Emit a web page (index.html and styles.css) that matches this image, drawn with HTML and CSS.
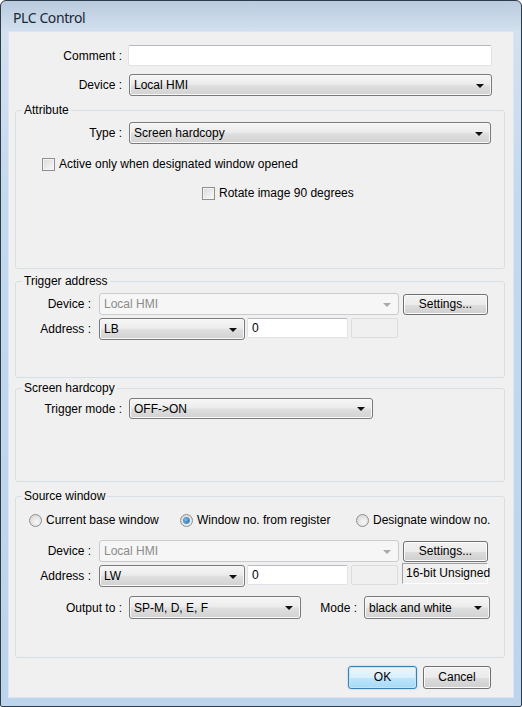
FILE: index.html
```html
<!DOCTYPE html>
<html lang="en">
<head>
	<meta charset="UTF-8">
	<title>PLC Control</title>
	<link rel="stylesheet" href="styles.css">
</head>
<body>
	<div class="window">
		<div class="titlebar"><span class="title">PLC Control</span></div>
		<div class="client">
			<div class="row row-comment">
				<span class="lbl lbl-top">Comment :</span>
				<div class="edit edit-comment"></div>
			</div>
			<div class="row row-device">
				<span class="lbl lbl-top">Device :</span>
				<div class="combo combo-device"><span>Local HMI</span><i class="arrow"></i></div>
			</div>

			<fieldset class="group group-attr">
				<legend>Attribute</legend>
				<div class="row row-type">
					<span class="lbl lbl-in">Type :</span>
					<div class="combo combo-type"><span>Screen hardcopy</span><i class="arrow"></i></div>
				</div>
				<div class="row row-check1">
					<span class="check"></span><span class="opt">Active only when designated window opened</span>
				</div>
				<div class="row row-check2">
					<span class="check"></span><span class="opt">Rotate image 90 degrees</span>
				</div>
			</fieldset>

			<fieldset class="group group-trigger">
				<legend>Trigger address</legend>
				<div class="row row-addr-dev">
					<span class="lbl lbl-short">Device :</span>
					<div class="combo combo-dev disabled"><span>Local HMI</span><i class="arrow"></i></div>
					<div class="btn btn-settings">Settings...</div>
				</div>
				<div class="row row-addr">
					<span class="lbl lbl-short">Address :</span>
					<div class="combo combo-addr"><span>LB</span><i class="arrow"></i></div>
					<div class="edit edit-num">0</div>
					<div class="edit edit-off"></div>
				</div>
			</fieldset>

			<fieldset class="group group-screen">
				<legend>Screen hardcopy</legend>
				<div class="row row-mode">
					<span class="lbl lbl-in">Trigger mode :</span>
					<div class="combo combo-trigger"><span>OFF-&gt;ON</span><i class="arrow"></i></div>
				</div>
			</fieldset>

			<fieldset class="group group-source">
				<legend>Source window</legend>
				<div class="row row-radios">
					<span class="radio-item radio-cur"><span class="radio"></span>Current base window</span>
					<span class="radio-item radio-reg"><span class="radio on"></span>Window no. from register</span>
					<span class="radio-item"><span class="radio"></span>Designate window no.</span>
				</div>
				<div class="row row-src-dev">
					<span class="lbl lbl-short">Device :</span>
					<div class="combo combo-dev disabled"><span>Local HMI</span><i class="arrow"></i></div>
					<div class="btn btn-settings">Settings...</div>
				</div>
				<div class="row row-src-addr">
					<span class="lbl lbl-short">Address :</span>
					<div class="combo combo-addr"><span>LW</span><i class="arrow"></i></div>
					<div class="edit edit-num">0</div>
					<div class="edit edit-off"></div>
					<div class="static">16-bit Unsigned</div>
				</div>
				<div class="row row-output">
					<span class="lbl lbl-in">Output to :</span>
					<div class="combo combo-output"><span>SP-M, D, E, F</span><i class="arrow"></i></div>
					<span class="lbl lbl-mode">Mode :</span>
					<div class="combo combo-mode"><span>black and white</span><i class="arrow"></i></div>
				</div>
			</fieldset>

			<div class="buttons">
				<div class="btn btn-ok">OK</div>
				<div class="btn btn-cancel">Cancel</div>
			</div>
		</div>
	</div>
</body>
</html>
```

FILE: styles.css
```css
body{
	margin:0;
	background:#fff;
}
.window{
	width:522px;
	height:707px;
	box-sizing:border-box;
	border:1px solid #2f3c4a;
	border-radius:6px 6px 2px 2px;
	background:linear-gradient(180deg,#b9cbde 0px,#d3e1ef 31px,#c4d9ee 200px,#bcd4ec 100%);
	display:flex;
	flex-direction:column;
	font:12px "Liberation Sans",Arial,sans-serif;
	color:#000;
}
.titlebar{
	height:31px;
	flex:none;
	display:flex;
	align-items:center;
	padding-left:12px;
	padding-top:2px;
	box-sizing:border-box;
}
.title{
	font:14px "Noto Sans",sans-serif;
	color:#1b2735;
	letter-spacing:-0.4px;
}
.client{
	flex:1;
	margin:0 8px 9px 8px;
	background:#f0f0f0;
	outline:1px solid #dbe6f2;
	padding-top:13px;
	box-sizing:border-box;
}

/* rows */
.row{
	display:flex;
	align-items:center;
}
.lbl{
	flex:none;
	text-align:right;
	white-space:nowrap;
}
.lbl-top{
	width:113px;
	margin-right:6px;
}
.lbl-in{
	width:106px;
	margin-right:7px;
}
.lbl-short{
	width:75px;
	margin-right:8px;
}
.lbl-mode{
	width:56px;
	margin-right:7px;
}
.row-device{
	margin-top:8px;
}
.row-device .combo{
	margin-left:1px;
}

/* controls */
.edit{
	flex:none;
	box-sizing:border-box;
	height:20px;
	background:#fff;
	border:1px solid #dfe3e8;
	border-top-color:#b5b9bf;
	border-radius:2px;
	padding:0 4px;
	line-height:18px;
}
.edit-comment{
	width:364px;
	height:21px;
}
.edit-num{
	width:101px;
	margin-left:2px;
}
.edit-off{
	width:47px;
	margin-left:3px;
	background:#f0f0f0;
	border-color:#dcdcdc;
}
.combo{
	flex:none;
	box-sizing:border-box;
	height:22px;
	display:flex;
	align-items:center;
	justify-content:space-between;
	padding:0 7px 0 4px;
	border:1px solid #7a7a7a;
	border-radius:3px;
	background:linear-gradient(180deg,#f6f6f6 0%,#ececec 45%,#dedede 55%,#d2d2d2 100%);
	box-shadow:inset 0 0 0 1px #f8f8f8;
}
.arrow{
	width:0;
	height:0;
	border-left:4px solid transparent;
	border-right:4px solid transparent;
	border-top:4px solid #111;
	margin-top:1px;
}
.combo.disabled{
	background:#f6f6f6;
	border-color:#c9cbcd;
	box-shadow:none;
	color:#8a8a8a;
}
.combo.disabled .arrow{
	border-top-color:#a9a9a9;
}
.combo-device{
	width:363px;
}
.combo-type{
	width:362px;
}
.combo-dev{
	width:300px;
}
.combo-addr{
	width:146px;
}
.combo-trigger{
	width:244px;
	height:21px;
}
.combo-output{
	width:172px;
	height:23px;
}
.combo-mode{
	width:126px;
	height:23px;
}
.btn{
	flex:none;
	box-sizing:border-box;
	height:21px;
	text-align:center;
	line-height:19px;
	border:1px solid #707070;
	border-radius:3px;
	background:linear-gradient(180deg,#f2f2f2 0%,#ebebeb 50%,#dddddd 51%,#cfcfcf 100%);
	box-shadow:inset 0 0 0 1px #fbfbfb;
}
.btn-settings{
	width:85px;
	margin-left:4px;
}
.static{
	flex:none;
	box-sizing:border-box;
	width:86px;
	height:21px;
	margin-left:4px;
	padding-left:3px;
	line-height:19px;
	border-top:1px solid #a0a0a0;
	border-left:1px solid #a0a0a0;
	border-bottom:1px solid #fff;
	border-right:1px solid #fff;
	white-space:nowrap;
	align-self:flex-start;
	margin-top:-2px;
}

/* check boxes and radios */
.check{
	flex:none;
	box-sizing:border-box;
	width:13px;
	height:13px;
	border:1px solid #8e8f8f;
	background:linear-gradient(135deg,#dadada,#f9f9f9);
	box-shadow:inset 0 0 0 1px #f4f4f4;
	margin-right:4px;
}
.row-check1{
	margin-top:13px;
	margin-left:26px;
}
.row-check2{
	margin-top:15px;
	margin-left:186px;
}
.radio-item{
	display:flex;
	align-items:center;
	white-space:nowrap;
}
.radio-cur{
	width:151px;
}
.radio-reg{
	width:176px;
}
.radio{
	flex:none;
	box-sizing:border-box;
	width:13px;
	height:13px;
	border-radius:50%;
	border:1px solid #8e8f8f;
	background:radial-gradient(circle at 60% 65%,#f7f7f7 0%,#dcdcdc 70%,#d0d0d0 100%);
	margin-right:4px;
	display:flex;
	align-items:center;
	justify-content:center;
}
.radio.on::after{
	content:"";
	width:5px;
	height:5px;
	border-radius:50%;
	background:radial-gradient(circle at 40% 40%,#8fd0f6 0%,#2a78c2 60%,#18559a 100%);
	box-shadow:0 0 0 1px #5d94c4;
}

/* group boxes */
.group{
	margin:0 8px 0 6px;
	padding:0;
	border:1px solid #d8dfe4;
	border-radius:3px;
	min-width:0;
}
.group legend{
	margin-left:6px;
	padding:0 2px;
	line-height:14px;
}
.group-attr{
	margin-top:7px;
	padding-bottom:68px;
}
.row-type{
	margin-top:5px;
}
.group-trigger{
	margin-top:5px;
	padding-bottom:37px;
}
.row-addr-dev{
	margin-top:5px;
}
.row-addr,.row-src-addr{
	margin-top:3px;
}
.row-addr .edit,.row-src-addr .edit{
	align-self:flex-start;
}
.group-screen{
	margin-top:3px;
	padding-bottom:62px;
}
.row-mode{
	margin-top:3px;
}
.group-source{
	margin-top:7px;
	padding-bottom:38px;
}
.row-radios{
	margin-top:10px;
	margin-left:13px;
}
.row-src-dev{
	margin-top:13px;
}
.row-output{
	margin-top:9px;
}

/* dialog buttons */
.buttons{
	display:flex;
	justify-content:flex-end;
	gap:6px;
	margin-top:8px;
	padding-right:22px;
}
.btn-ok,.btn-cancel{
	height:23px;
	line-height:21px;
}
.btn-ok{
	width:69px;
	border-color:#3c7fb1;
	background:linear-gradient(180deg,#eaf6fd 0%,#d9f0fc 50%,#bee6fd 51%,#a7d9f5 100%);
	box-shadow:inset 0 0 0 1px #c4e5f6,0 0 2px #8ccbf0;
}
.btn-cancel{
	width:68px;
}
```
